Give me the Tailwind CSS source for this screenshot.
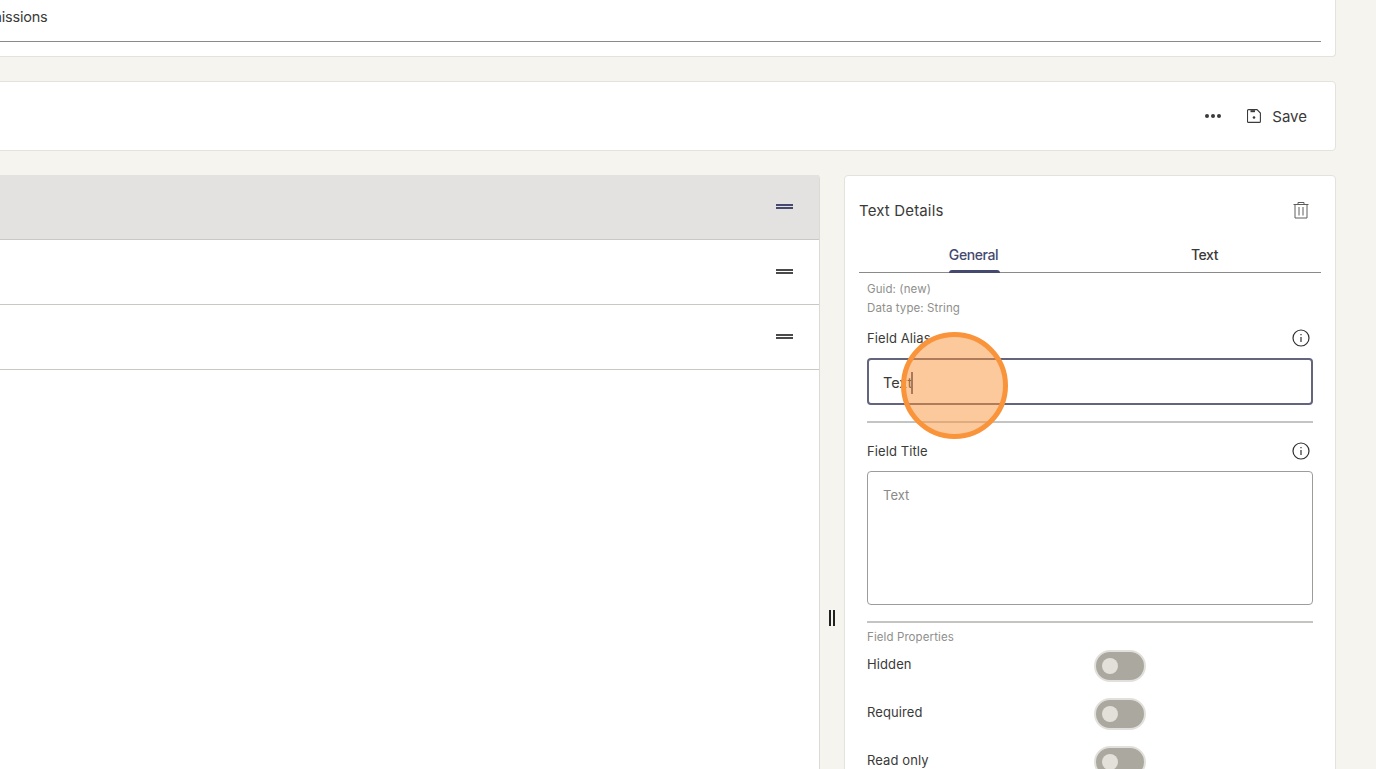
<!DOCTYPE html>
<html lang="en">
<head>
<meta charset="utf-8">
<script src="https://cdn.jsdelivr.net/npm/@tailwindcss/browser@4"></script>
<title>Text Details</title>
</head>
<body class="bg-[#f6f4ee]">
<div class="relative h-[769px] w-[1376px] overflow-hidden bg-[#f6f4ee] font-['Inter',sans-serif] text-[#3a3a38]">
  <div class="ml-[-40px] flex w-[1376px] flex-col">
    <section class="h-[57px] rounded-b border border-t-0 border-[#e4e2dd] bg-white pr-[14px]">
      <div class="h-[42px] border-b border-[#8a8a88] pt-[8px]">
        <span class="ml-[2px] block text-[14.5px] leading-[17px] tracking-[-0.2px]">Submissions</span>
      </div>
    </section>
    <section class="mt-6 flex h-[70px] items-center justify-end rounded border border-[#e4e2dd] bg-white pr-7">
      <svg class="mr-[25px]" width="18" height="6" viewBox="0 0 18 6" fill="#3a3a38"><circle cx="3" cy="3" r="2"/><circle cx="9" cy="3" r="2"/><circle cx="15" cy="3" r="2"/></svg>
      <svg class="mr-[11px]" width="14" height="14" viewBox="0 0 14 14" fill="none" stroke="#3a3a38" stroke-width="1.1"><path d="M1.5 0.6h8.5l3.4 3.4v8.4a1 1 0 0 1-1 1h-10.9a1 1 0 0 1-1-1v-10.800a1 1 0 0 1 1-1z"/><path d="M3.500 2.200h4.500" stroke-width="2"/><circle cx="7" cy="8.500" r="1.300" fill="#3a3a38" stroke="none"/></svg>
      <span class="pt-[2px] text-[15px] leading-[20px]">Save</span>
    </section>
    <div class="mt-6 flex items-start">
      <section class="h-[620px] w-[860px] rounded-tr border-r border-[#dcdad5] bg-white">
        <div class="flex h-[65px] items-center justify-end border-b border-[#c9c8c4] bg-[#e3e2e0] pr-[26px] pb-[2px]"><span class="block h-[5px] w-[17px] border-y-2 border-[#45496f]"></span></div>
        <div class="flex h-[65px] items-center justify-end border-b border-[#c9c8c4] pr-[26px] pb-[2px]"><span class="block h-[5px] w-[17px] border-y-2 border-[#4a4a48]"></span></div>
        <div class="flex h-[65px] items-center justify-end border-b border-[#c9c8c4] pr-[26px] pb-[2px]"><span class="block h-[5px] w-[17px] border-y-2 border-[#4a4a48]"></span></div>
      </section>
      <div class="flex h-[620px] w-[24px] items-start justify-center pt-[435px]">
        <span class="flex gap-[2px]"><i class="block h-[16px] w-[2px] bg-[#222]"></i><i class="block h-[16px] w-[2px] bg-[#222]"></i></span>
      </div>
      <aside class="h-[620px] w-[492px] rounded border border-[#e4e2dd] bg-white px-[14px]">
        <div class="flex h-[70px] items-center justify-between pb-[1px]">
          <h2 class="text-[15px] font-normal leading-[20px] tracking-[0.15px]">Text Details</h2>
          <svg class="mr-[12px] mb-[2px]" width="16" height="18" viewBox="0 0 16 18" fill="none" stroke="#5e5e5c" stroke-width="1"><path d="M0.5 3.500h15M5 3.500V1.500h6v2M2 3.500v13.500h12V3.500M6 6v8.500M10 6v8.500"/></svg>
        </div>
        <div class="flex h-[27px] border-b border-[#8a8a88] text-[14px] font-medium leading-[17px] tracking-[-0.4px]">
          <div class="relative flex w-[229px] justify-center text-[#45496f]">General<span class="absolute bottom-[-1px] left-[90px] h-[3px] w-[51px] rounded-t bg-[#45496f]"></span></div>
          <div class="flex flex-1 justify-center">Text</div>
        </div>
        <div class="px-2">
          <p class="mt-[9px] text-[11.5px] leading-[14px] tracking-[0.1px] text-[#8f8f8c]">Guid: (new)</p>
          <p class="mt-[5px] text-[11.5px] leading-[14px] tracking-[0.1px] text-[#8f8f8c]">Data type: String</p>
          <div class="mt-[14px] flex h-[18px] items-center justify-between text-[13px] tracking-[0.1px]">
            <span class="pt-[2px]">Field Alias</span>
            <svg width="18" height="18" viewBox="0 0 18 18" fill="none" stroke="#2f2f2d" stroke-width="1.2" class="mr-[3px]"><circle cx="9" cy="9" r="8"/><path d="M9 8v5"/><path d="M9 5v1.200"/></svg>
          </div>
          <div class="mt-[11px] flex h-[47px] items-center rounded border-2 border-[#62657b] pl-[14px] pt-[2px] text-[14.5px]">Text<span class="ml-[-1px] h-[22px] w-[2px] bg-[#5b5e78]"></span></div>
          <div class="mt-4 border-b-2 border-[#c4c4c2]"></div>
          <div class="mt-[19px] flex h-[18px] items-center justify-between text-[13px] tracking-[0.1px]">
            <span class="pt-[2px]">Field Title</span>
            <svg width="18" height="18" viewBox="0 0 18 18" fill="none" stroke="#2f2f2d" stroke-width="1.2" class="mr-[3px]"><circle cx="9" cy="9" r="8"/><path d="M9 8v5"/><path d="M9 5v1.200"/></svg>
          </div>
          <div class="mt-[11px] h-[134px] rounded border border-[#9c9c9a] px-[15px] pt-[14px] text-[13px] leading-[18px] text-[#8a8a88]">Text</div>
          <div class="mt-4 border-b-2 border-[#c4c4c2]"></div>
          <p class="mt-[7px] text-[11.5px] leading-[14px] tracking-[0.1px] text-[#8f8f8c]">Field Properties</p>
          <div class="mt-[6px] flex h-[34px] w-[279px] items-start justify-between text-[13px] leading-[20px] tracking-[0.1px]">
            <span class="pt-[4px]">Hidden</span>
            <span class="flex h-[32px] w-[52px] items-center rounded-full border-2 border-[#e2e0da] bg-[#aaa89f] pl-[6px]"><i class="block h-[16px] w-[16px] rounded-full bg-[#e3e0d9]"></i></span>
          </div>
          <div class="mt-[14px] flex h-[34px] w-[279px] items-start justify-between text-[13px] leading-[20px] tracking-[0.1px]">
            <span class="pt-[4px]">Required</span>
            <span class="flex h-[32px] w-[52px] items-center rounded-full border-2 border-[#e2e0da] bg-[#aaa89f] pl-[6px]"><i class="block h-[16px] w-[16px] rounded-full bg-[#e3e0d9]"></i></span>
          </div>
          <div class="mt-[14px] flex h-[34px] w-[279px] items-start justify-between text-[13px] leading-[20px] tracking-[0.1px]">
            <span class="pt-[4px]">Read only</span>
            <span class="flex h-[32px] w-[52px] items-center rounded-full border-2 border-[#e2e0da] bg-[#aaa89f] pl-[6px]"><i class="block h-[16px] w-[16px] rounded-full bg-[#e3e0d9]"></i></span>
          </div>
        </div>
      </aside>
    </div>
  </div>
  <div class="absolute left-[901px] top-[332px] h-[107px] w-[107px] rounded-full border-[5px] border-[#f9943b] bg-[#f9943b]/50"></div>
</div>
</body>
</html>
